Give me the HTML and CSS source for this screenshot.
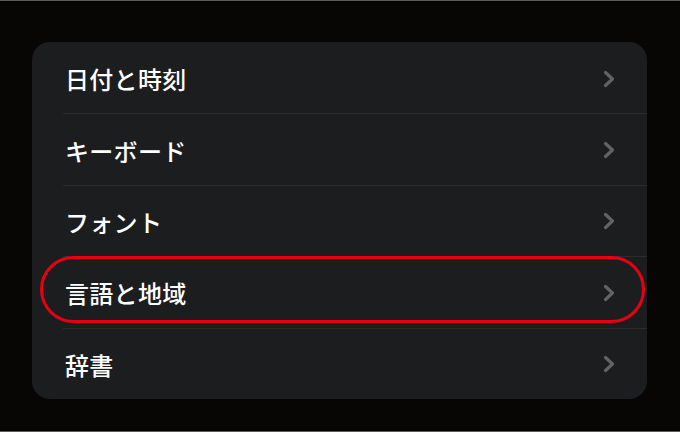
FILE: index.html
```html
<!DOCTYPE html>
<html lang="ja">
<head>
  <meta charset="UTF-8" />
  <meta name="viewport" content="width=device-width, initial-scale=1" />
  <title>一般</title>
  <link rel="stylesheet" href="styles.css">
</head>
<body>
  <div class="list">
    <div class="row">
      <span class="label">日付と時刻</span>
      <svg class="chevron" viewBox="0 0 12 18"><path d="M2.5 2.5 L9.5 9 L2.5 15.5" /></svg>
    </div>
    <div class="row">
      <span class="label">キーボード</span>
      <svg class="chevron" viewBox="0 0 12 18"><path d="M2.5 2.5 L9.5 9 L2.5 15.5" /></svg>
    </div>
    <div class="row">
      <span class="label">フォント</span>
      <svg class="chevron" viewBox="0 0 12 18"><path d="M2.5 2.5 L9.5 9 L2.5 15.5" /></svg>
    </div>
    <div class="row marked">
      <span class="label">言語と地域</span>
      <svg class="chevron" viewBox="0 0 12 18"><path d="M2.5 2.5 L9.5 9 L2.5 15.5" /></svg>
      <div class="highlight"></div>
    </div>
    <div class="row">
      <span class="label">辞書</span>
      <svg class="chevron" viewBox="0 0 12 18"><path d="M2.5 2.5 L9.5 9 L2.5 15.5" /></svg>
    </div>
  </div>
</body>
</html>
```

FILE: styles.css
```css
* {
  box-sizing: border-box;
}

html, body {
  margin: 0;
  height: 432px;
}

body {
  background: #080505;
  border-top: 1px solid #5e5957;
  border-bottom: 1px solid #5e5957;
  font-family: "Noto Sans CJK JP", "Noto Sans", sans-serif;
  padding-top: 41px;
  overflow: hidden;
}

.list {
  margin-left: 32px;
  width: 615px;
  background: #1c1d1f;
  border-radius: 18px;
}

.row {
  position: relative;
  height: 71.4px;
  display: flex;
  align-items: center;
  justify-content: space-between;
  padding: 2px 32px 0 33px;
}

.row + .row::before {
  content: "";
  position: absolute;
  top: 0;
  left: 31px;
  right: 0;
  height: 1px;
  background: #2b2c2e;
}

.label {
  color: #fff;
  font-size: 24px;
  font-weight: 500;
  letter-spacing: 0.3px;
}

.chevron {
  width: 12px;
  height: 18px;
  fill: none;
  stroke: #636366;
  stroke-width: 3.2;
  stroke-linecap: round;
  stroke-linejoin: round;
}

.highlight {
  position: absolute;
  top: 0;
  left: 8px;
  right: 2px;
  height: 67px;
  border: 3px solid #e60012;
  border-radius: 34px;
  pointer-events: none;
}
```
